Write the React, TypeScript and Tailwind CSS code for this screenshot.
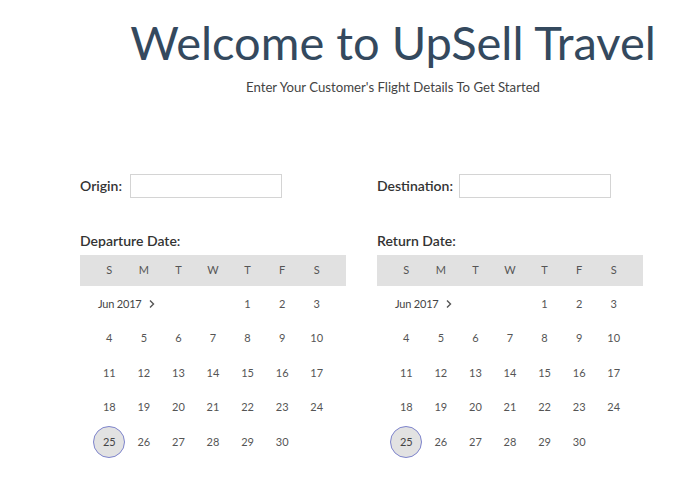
import React from "react";

const WEEKDAYS = ["S", "M", "T", "W", "T", "F", "S"];

// June 2017 starts on a Thursday, so the first row holds the month label
const WEEKS: (number | null)[][] = [
  [null, null, null, null, 1, 2, 3],
  [4, 5, 6, 7, 8, 9, 10],
  [11, 12, 13, 14, 15, 16, 17],
  [18, 19, 20, 21, 22, 23, 24],
  [25, 26, 27, 28, 29, 30, null],
];

const SELECTED = 25;

function Calendar() {
  return (
    <div className="w-[266px]">
      <div className="bg-[#e1e1e1] h-[31px] px-[12px] grid grid-cols-7 items-center">
        {WEEKDAYS.map((d, i) => (
          <div key={i} className="text-center text-[11px] text-[#555]">
            {d}
          </div>
        ))}
      </div>
      <div className="px-[12px] pt-[1px]">
        {WEEKS.map((week, wi) => (
          <div key={wi} className="grid grid-cols-7 h-[34.5px] items-center relative">
            {wi === 0 && (
              <div className="absolute left-[6px] top-0 h-full flex items-center text-[11px] text-[#444]">
                <span className="tracking-[-0.2px]">Jun 2017</span>
                <svg width="8" height="10" viewBox="0 0 8 10" className="ml-[6px]">
                  <path d="M2 1.5 L5.5 5 L2 8.5" fill="none" stroke="#555" strokeWidth="1.4" />
                </svg>
              </div>
            )}
            {week.map((day, di) => (
              <div key={di} className="flex justify-center items-center">
                {day === SELECTED ? (
                  <span className="w-[32px] h-[32px] rounded-full bg-[#e2e2e2] border border-[#7e84cc] flex items-center justify-center text-[11px] text-[#444]">
                    {day}
                  </span>
                ) : (
                  <span className="text-[11px] text-[#555]">{day ?? ""}</span>
                )}
              </div>
            ))}
          </div>
        ))}
      </div>
    </div>
  );
}

function Field({ label, gap }: { label: string; gap: string }) {
  return (
    <div className="flex items-center h-[24px]">
      <span className={`text-[14px] font-semibold text-[#333] ${gap}`}>{label}</span>
      <div className="w-[152px] h-[24px] border border-[#d4d4d4] bg-white" />
    </div>
  );
}

export default function App() {
  return (
    <div
      className="w-[695px] h-[494px] bg-white overflow-hidden"
      style={{ fontFamily: "Lato, 'Liberation Sans', sans-serif" }}
    >
      <div className="pl-[91px] pt-[15px] text-center">
        <h1 className="text-[47px] leading-[54px] text-[#34495e]">Welcome to UpSell Travel</h1>
        <p className="text-[13.2px] text-[#444] mt-[9px]">
          Enter Your Customer's Flight Details To Get Started
        </p>
      </div>

      <div className="flex pl-[80px] gap-[31px] mt-[76px]">
        <div className="flex flex-col">
          <Field label="Origin:" gap="mr-[8px]" />
          <div className="text-[14px] font-semibold text-[#333] mt-[32px] mb-[4px]">Departure Date:</div>
          <Calendar />
        </div>
        <div className="flex flex-col">
          <Field label="Destination:" gap="mr-[6px]" />
          <div className="text-[14px] font-semibold text-[#333] mt-[32px] mb-[4px]">Return Date:</div>
          <Calendar />
        </div>
      </div>
    </div>
  );
}
